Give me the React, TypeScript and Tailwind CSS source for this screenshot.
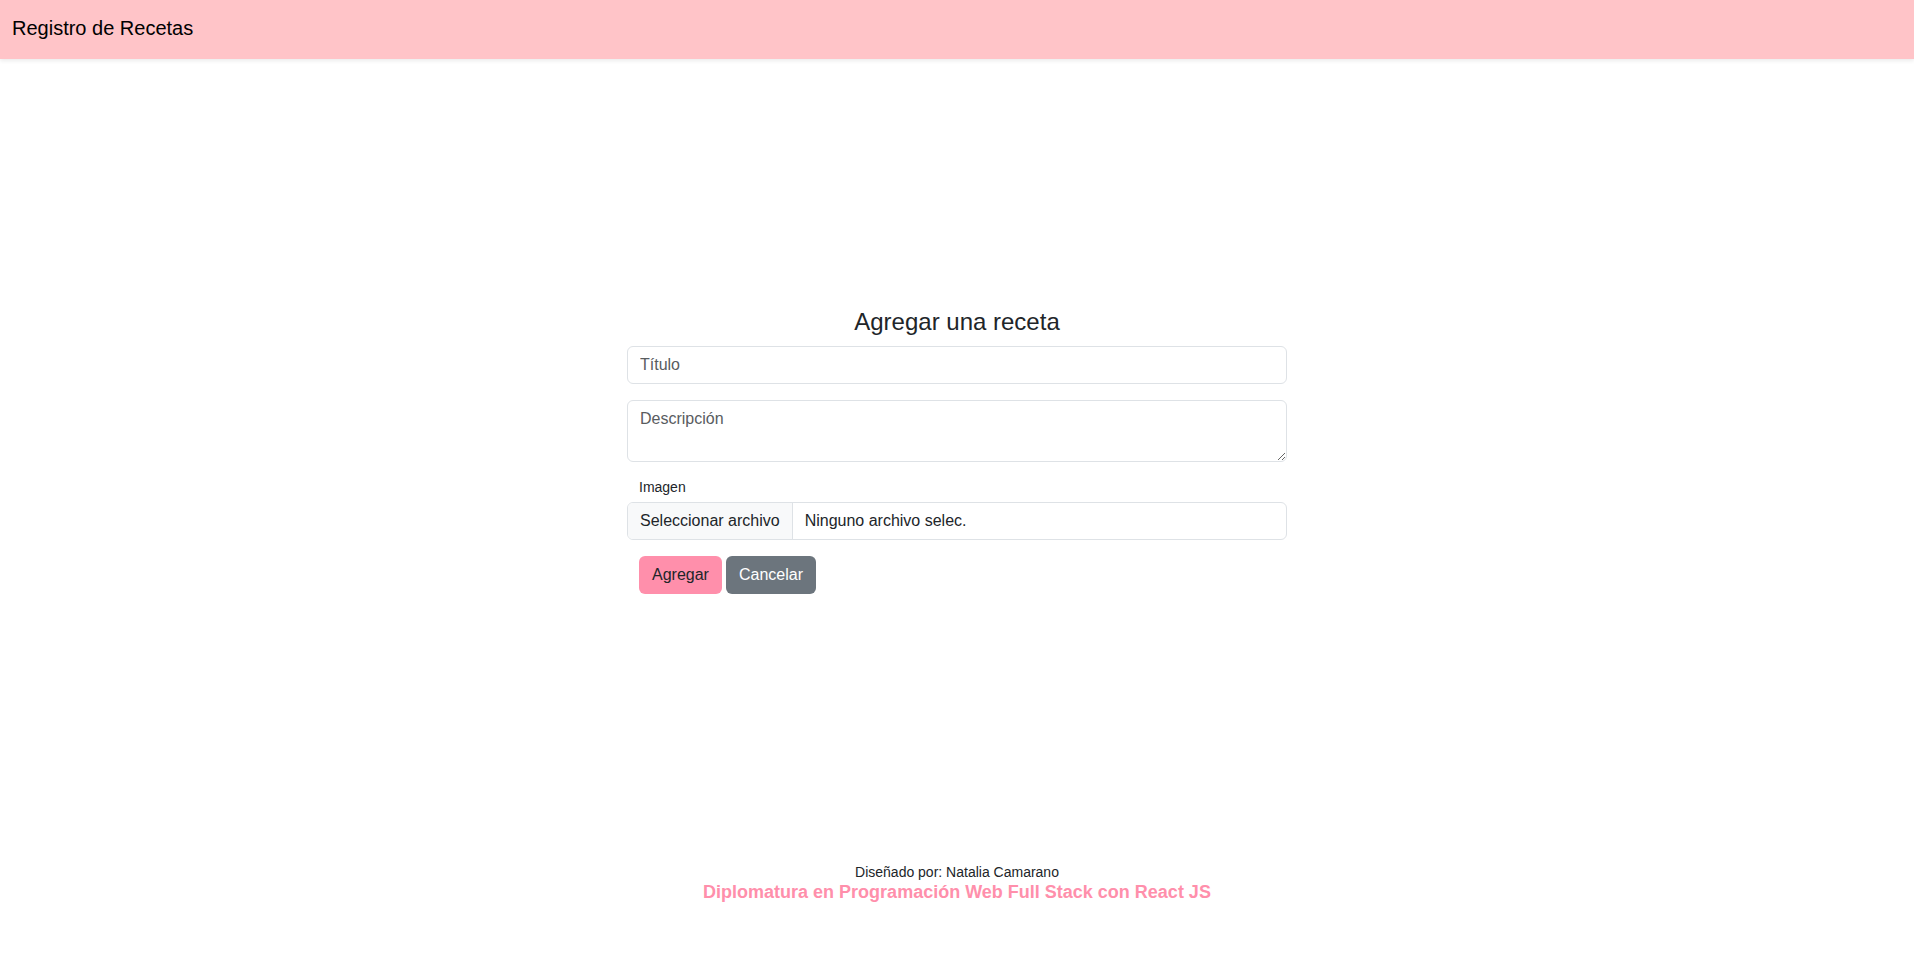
export default function App() {
  return (
    <div
      className="flex h-screen flex-col bg-white text-[#212529]"
      style={{ fontFamily: '"Liberation Sans", Arial, sans-serif' }}
    >
      <header className="flex h-[59px] shrink-0 items-center bg-[#ffc4c8] px-3 pb-1 shadow-[0_2px_4px_rgba(0,0,0,0.08)]">
        <span className="text-[20px] leading-[30px] text-black">Registro de Recetas</span>
      </header>

      <main className="flex flex-1 items-center justify-center">
        <form className="w-[660px]" onSubmit={(e) => e.preventDefault()}>
          <h4 className="mb-[9px] text-center text-2xl leading-[1.2]">Agregar una receta</h4>

          <input
            type="text"
            placeholder="Título"
            className="mb-4 block h-[38px] w-full rounded-md border border-[#dee2e6] px-3 text-base outline-none placeholder:text-[#595c5f]"
          />

          <textarea
            rows={2}
            placeholder="Descripción"
            className="mb-[15px] block w-full rounded-md border border-[#dee2e6] px-3 py-1.5 text-base leading-6 outline-none placeholder:text-[#595c5f]"
          />

          <label className="mb-1 ml-3 block text-sm leading-[21px]">Imagen</label>
          <div className="flex h-[38px] w-full overflow-hidden rounded-md border border-[#dee2e6] text-base">
            <span className="flex items-center border-r border-[#dee2e6] bg-[#f8f9fa] px-3">
              Seleccionar archivo
            </span>
            <span className="flex items-center px-3">Ninguno archivo selec.</span>
          </div>

          <div className="mt-4 ml-3 flex gap-1">
            <button
              type="submit"
              className="h-[38px] rounded-md bg-[#ff8fab] px-[13px] text-base text-[#212529]"
            >
              Agregar
            </button>
            <button type="button" className="h-[38px] rounded-md bg-[#6c757d] px-[13px] text-base text-white">
              Cancelar
            </button>
          </div>
        </form>
      </main>

      <footer className="h-[113px] shrink-0 pt-[19px] text-center">
        <p className="text-sm leading-[21px]">Diseñado por: Natalia Camarano</p>
        <p className="text-lg font-bold leading-[19px] text-[#ff8fab]">
          Diplomatura en Programación Web Full Stack con React JS
        </p>
      </footer>
    </div>
  );
}
